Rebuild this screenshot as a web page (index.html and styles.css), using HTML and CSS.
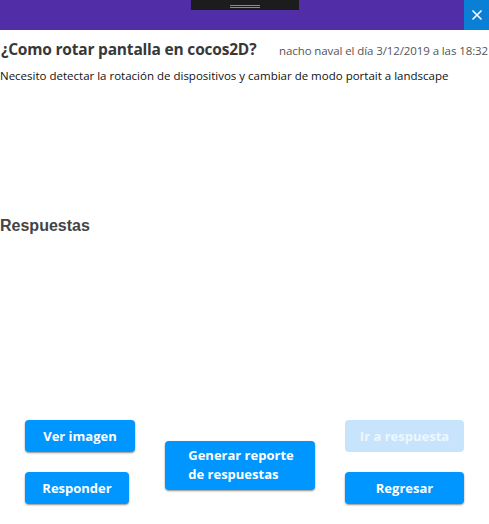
FILE: index.html
```html
<!DOCTYPE html>
<html lang="es">
<head>
<meta charset="utf-8">
<link rel="stylesheet" href="styles.css">
</head>
<body>
<header class="topbar">
  <div class="grip"><span class="grip-line"></span><span class="grip-line"></span></div>
  <button class="close" aria-label="Cerrar">
    <svg width="12" height="12" viewBox="0 0 12 12"><path d="M1.5 1.5 L10.5 10.5 M10.5 1.5 L1.5 10.5" stroke="#fff" stroke-width="1.6" fill="none"/></svg>
  </button>
</header>
<main class="content">
  <div class="title-row">
    <h1 class="title">¿Como rotar pantalla en cocos2D?</h1>
    <span class="meta">nacho naval el día 3/12/2019 a las 18:32</span>
  </div>
  <p class="body">Necesito detectar la rotación de dispositivos y cambiar de modo portait a landscape</p>
  <h2 class="answers">Respuestas</h2>
  <div class="actions">
    <div class="col col-left">
      <button class="btn w110">Ver imagen</button>
      <button class="btn w104">Responder</button>
    </div>
    <div class="col col-mid">
      <button class="btn btn-tall"><span class="tall-text">Generar reporte<br>de respuestas</span></button>
    </div>
    <div class="col col-right">
      <button class="btn w120 disabled">Ir a respuesta</button>
      <button class="btn w120">Regresar</button>
    </div>
  </div>
</main>
</body>
</html>
```
FILE: styles.css
```css
* { box-sizing: border-box; }
html, body { margin: 0; padding: 0; background: #fff; }
body { width: 489px; height: 524px; overflow: hidden; font-family: "Open Sans", "Noto Sans", sans-serif; }

.topbar {
  height: 30px;
  background: #512da8;
  position: relative;
  display: flex;
  justify-content: center;
}
.grip {
  width: 108px;
  height: 10px;
  background: #1c1c1c;
  display: flex;
  flex-direction: column;
  align-items: center;
  justify-content: center;
  gap: 1px;
  padding-top: 2px;
}
.grip-line { width: 30px; height: 1px; background: #8a8a8a; }
.close {
  position: absolute;
  right: 0;
  top: 0;
  width: 25px;
  height: 30px;
  border: 0;
  padding: 0;
  background: #0a7fd6;
  display: flex;
  align-items: center;
  justify-content: center;
}

.content { padding: 0; }
.title-row {
  display: flex;
  align-items: baseline;
  padding: 8px 0 0 1px;
}
.title {
  margin: 0;
  font-size: 15.5px;
  font-weight: 700;
  color: #383838;
  letter-spacing: -0.2px;
}
.meta {
  margin-left: auto;
  font-size: 11.5px;
  color: #555;
  letter-spacing: -0.1px;
  padding-right: 1px;
}
.body {
  margin: 8px 0 0 0;
  font-size: 11.5px;
  color: #111;
}
.answers {
  margin: 134px 0 0 0;
  font-family: "Liberation Sans", Arial, sans-serif;
  font-size: 16px;
  font-weight: 700;
  color: #444;
}

.actions {
  margin-top: 185px;
  padding-left: 25px;
  display: flex;
  align-items: center;
  gap: 30px;
}
.col { display: flex; flex-direction: column; gap: 20px; }
.col-left { width: 110px; }
.col-mid { width: 150px; padding-top: 6px; }
.col-right { width: 120px; }

.btn {
  height: 32px;
  border: 0;
  border-radius: 4px;
  background: #0096ff;
  color: #fff;
  font-family: "Open Sans", "Noto Sans", sans-serif;
  font-size: 13px;
  font-weight: 700;
  box-shadow: 0 1px 2px rgba(0,0,0,0.45);
  padding: 0;
}
.w110 { width: 110px; }
.w104 { width: 104px; }
.w120 { width: 119px; }
.disabled { background: #c7e4fc; box-shadow: none; color: #eef7ff; }
.btn-tall {
  width: 150px;
  height: 49px;
  display: flex;
  justify-content: center;
  align-items: center;
  text-align: left;
  line-height: 19px;
}
.tall-text { display: block; padding-left: 2px; }
```
